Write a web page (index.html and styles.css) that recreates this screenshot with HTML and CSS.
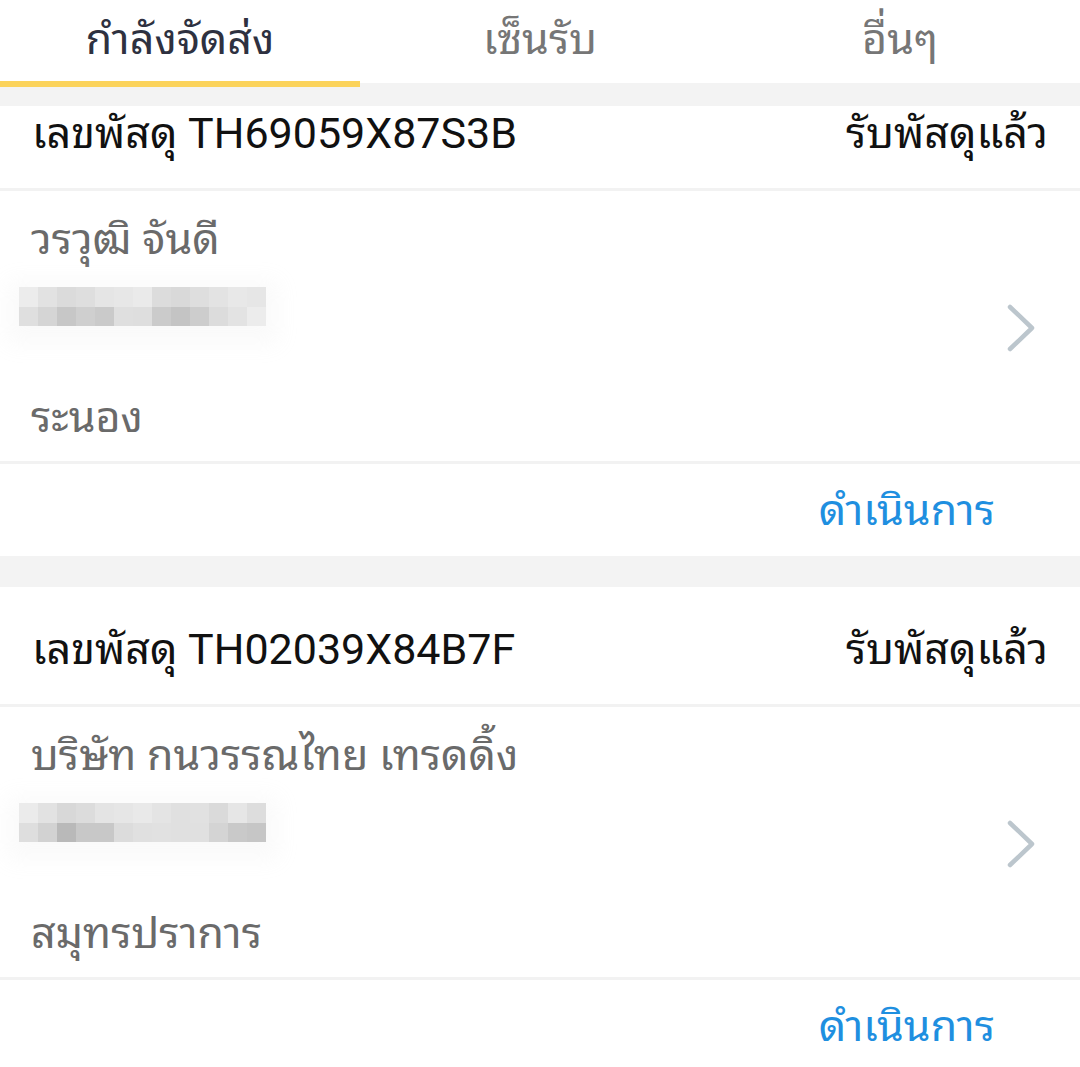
FILE: index.html
```html
<!DOCTYPE html>
<html lang="th">
<head>
<meta charset="utf-8">
<title>พัสดุ</title>
<link rel="stylesheet" href="styles.css">
</head>
<body>
<div class="app">
  <nav class="tabs">
    <div class="tab tab--active">กำลังจัดส่ง</div>
    <div class="tab">เซ็นรับ</div>
    <div class="tab">อื่นๆ</div>
  </nav>
  <div class="list">
    <section class="card">
      <div class="card-head card-head--cut">
        <span class="parcel">เลขพัสดุ TH69059X87S3B</span>
        <span class="status">รับพัสดุแล้ว</span>
      </div>
      <div class="card-body">
        <div class="info">
          <div class="line">วรวุฒิ จันดี</div>
          <div class="mosaic">
            <div class="mosaic-row">
              <i style="background:#ececec"></i><i style="background:#e2e2e2"></i><i style="background:#dbdbdb"></i><i style="background:#dedede"></i><i style="background:#e5e5e5"></i><i style="background:#e7e7e7"></i><i style="background:#eaeaea"></i><i style="background:#dcdcdc"></i><i style="background:#d9d9d9"></i><i style="background:#dedede"></i><i style="background:#e3e3e3"></i><i style="background:#e8e8e8"></i><i style="background:#e6e6e6"></i>
            </div>
            <div class="mosaic-row">
              <i style="background:#dfdfdf"></i><i style="background:#d5d5d5"></i><i style="background:#c7c7c7"></i><i style="background:#cfcfcf"></i><i style="background:#cacaca"></i><i style="background:#dfdfdf"></i><i style="background:#dedede"></i><i style="background:#cbcbcb"></i><i style="background:#c4c4c4"></i><i style="background:#cdcdcd"></i><i style="background:#dcdcdc"></i><i style="background:#e3e3e3"></i><i style="background:#ececec"></i>
            </div>
          </div>
          <div class="line">ระนอง</div>
        </div>
        <svg class="chevron" viewBox="0 0 30 50" width="30" height="50"><path d="M4 4 L26 25 L4 46" fill="none" stroke="#bcc6cd" stroke-width="4.5" stroke-linecap="round" stroke-linejoin="round"/></svg>
      </div>
      <div class="card-foot"><span class="action">ดำเนินการ</span></div>
    </section>

    <section class="card">
      <div class="card-head">
        <span class="parcel">เลขพัสดุ TH02039X84B7F</span>
        <span class="status">รับพัสดุแล้ว</span>
      </div>
      <div class="card-body">
        <div class="info">
          <div class="line">บริษัท กนวรรณไทย เทรดดิ้ง</div>
          <div class="mosaic">
            <div class="mosaic-row">
              <i style="background:#ebebeb"></i><i style="background:#e2e2e2"></i><i style="background:#d8d8d8"></i><i style="background:#dcdcdc"></i><i style="background:#e4e4e4"></i><i style="background:#e6e6e6"></i><i style="background:#e9e9e9"></i><i style="background:#e4e4e4"></i><i style="background:#e0e0e0"></i><i style="background:#e1e1e1"></i><i style="background:#dadada"></i><i style="background:#e6e6e6"></i><i style="background:#dddddd"></i>
            </div>
            <div class="mosaic-row">
              <i style="background:#dedede"></i><i style="background:#d2d2d2"></i><i style="background:#b9b9b9"></i><i style="background:#c8c8c8"></i><i style="background:#c8c8c8"></i><i style="background:#dcdcdc"></i><i style="background:#e0e0e0"></i><i style="background:#e1e1e1"></i><i style="background:#e0e0e0"></i><i style="background:#e0e0e0"></i><i style="background:#d4d4d4"></i><i style="background:#c9c9c9"></i><i style="background:#c6c6c6"></i>
            </div>
          </div>
          <div class="line">สมุทรปราการ</div>
        </div>
        <svg class="chevron" viewBox="0 0 30 50" width="30" height="50"><path d="M4 4 L26 25 L4 46" fill="none" stroke="#bcc6cd" stroke-width="4.5" stroke-linecap="round" stroke-linejoin="round"/></svg>
      </div>
      <div class="card-foot"><span class="action">ดำเนินการ</span></div>
    </section>
  </div>
</div>
</body>
</html>
```

FILE: styles.css
```css
* { box-sizing: border-box; margin: 0; padding: 0; }
html, body { background: #f3f3f3; }
body {
  font-family: Roboto, "Noto Sans Thai Looped", "Noto Sans Thai", sans-serif;
  width: 1080px;
  height: 1067px;
  overflow: hidden;
}
.app { display: flex; flex-direction: column; }

.tabs {
  display: grid;
  grid-template-columns: repeat(3, 1fr);
  height: 83px;
  background: #fff;
}
.tab {
  display: flex;
  align-items: center;
  justify-content: center;
  font-size: 43px;
  color: #767676;
  padding-bottom: 12px;
  border-bottom: 6px solid transparent;
}
.tab--active {
  color: #2e3140;
  border-bottom-color: #fbd35b;
}

.list {
  padding-top: 23px;
  display: flex;
  flex-direction: column;
  gap: 31px;
}

.card { background: #fff; }

.card-head {
  display: flex;
  justify-content: space-between;
  align-items: center;
  padding: 37px 32px 30px;
  line-height: 50px;
  font-size: 43px;
  color: #111;
  border-bottom: 3px solid #f2f2f2;
}
.card-head--cut { padding-top: 2px; }

.card-body {
  display: flex;
  align-items: center;
  justify-content: space-between;
  padding: 23px 44px 19px 0;
  border-bottom: 3px solid #f2f2f2;
}
.info { display: flex; flex-direction: column; }
.line {
  padding-left: 31px;
  font-size: 43px;
  line-height: 50px;
  color: #6a6a6a;
}
.mosaic {
  align-self: flex-start;
  margin: 23px 0 66px 19px;
  display: flex;
  flex-direction: column;
  box-shadow: 0 6px 20px 12px rgba(249,249,249,0.9);
}
.mosaic-row { display: flex; }
.mosaic-row i { display: block; width: 19px; height: 19.5px; }

.chevron { display: block; }

.card-foot {
  display: flex;
  justify-content: flex-end;
  align-items: center;
  height: 92px;
  padding-right: 85px;
}
.action {
  font-size: 43px;
  color: #1f8fe0;
  line-height: 50px;
}
```
